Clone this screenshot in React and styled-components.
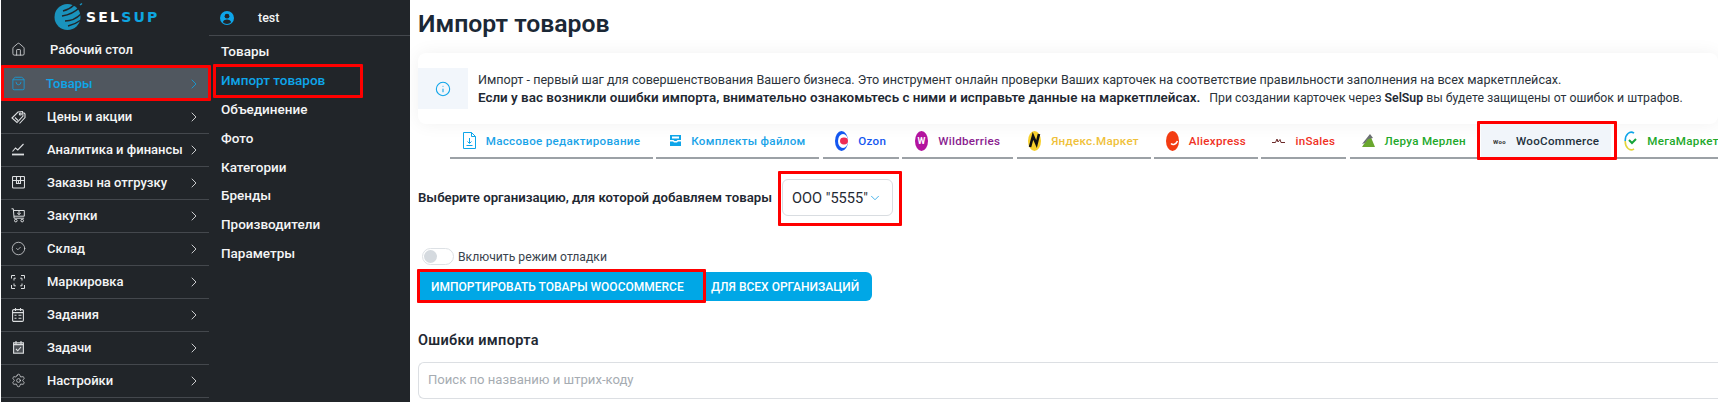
import React from 'react';
import styled, { createGlobalStyle, css } from 'styled-components';
import { House, ShoppingBag, CircleCheck, Settings, ChevronRight, ChevronDown, Info } from 'lucide-react';

const GlobalStyle = createGlobalStyle`
  html, body { margin: 0; padding: 0; background: #fff; }
  body {
    width: 1718px;
    height: 402px;
    overflow: hidden;
    font-family: Roboto, "Liberation Sans", sans-serif;
  }
`;

const redBox = css`
  position: relative;
  &::after {
    content: '';
    position: absolute;
    inset: ${(p) => p.$inset};
    border: 3px solid #f00;
    border-radius: 1px;
    pointer-events: none;
    z-index: 3;
  }
`;

const Page = styled.div`
  display: flex;
  height: 402px;
  padding-left: 1px;
  box-sizing: border-box;
`;

const Sidebar = styled.aside`
  width: 208px;
  flex: none;
  background: #212529;
`;

const LogoRow = styled.div`
  height: 33px;
  display: flex;
  align-items: center;
  padding-left: 53px;
  gap: 3px;
`;

const LogoText = styled.span`
  font-family: "DejaVu Sans", sans-serif;
  font-weight: 700;
  font-size: 14px;
  letter-spacing: 2.2px;
  color: #fff;
  b { color: #0ea5e0; font-weight: 700; }
`;

const NavRow = styled.div`
  height: ${(p) => (p.$plain ? 34 : 33)}px;
  box-sizing: border-box;
  display: flex;
  align-items: center;
  padding: 0 7px ${(p) => (p.$plain ? 0 : 1)}px 10px;
  color: ${(p) => (p.$active ? '#0ea5e9' : '#f4f5f6')};
  background: ${(p) => (p.$active ? '#50575f' : 'transparent')};
  border-bottom: 1px solid ${(p) => (p.$plain ? 'transparent' : '#44484d')};
  ${(p) => p.$inset && redBox}
`;

const NavIcon = styled.span`
  width: 14px;
  height: 16px;
  flex: none;
  display: flex;
  align-items: center;
  justify-content: center;
  color: ${(p) => (p.$active ? '#0ea5e9' : '#dcdee0')};
  svg { display: block; flex: none; }
`;

const NavLabel = styled.span`
  flex: 1;
  margin-left: ${(p) => p.$gap}px;
  font-size: 13px;
  font-weight: 500;
  white-space: nowrap;
`;

const SubPanel = styled.div`
  width: 201px;
  flex: none;
  background: #212529;
`;

const UserRow = styled.div`
  height: 36px;
  box-sizing: border-box;
  display: flex;
  align-items: center;
  padding-left: 11px;
  gap: 24px;
  color: #f4f5f6;
  font-size: 12.5px;
  font-weight: 500;
  border-bottom: 1px solid #44484d;
`;

const SubList = styled.div`
  display: flex;
  flex-direction: column;
  padding-top: 1px;
`;

const SubItem = styled.div`
  height: 28.8px;
  display: flex;
  align-items: center;
  padding-left: 12px;
  font-size: 13.5px;
  font-weight: 500;
  color: ${(p) => (p.$active ? '#0ea5e9' : '#f4f5f6')};
  ${(p) => p.$inset && redBox}
`;

const Main = styled.main`
  flex: 1;
  min-width: 0;
  overflow: hidden;
  padding: 8px 0 0 8px;
  color: #1f2933;
`;

const Title = styled.h1`
  margin: 0;
  height: 45px;
  font-size: 24.8px;
  line-height: 32px;
  font-weight: 600;
  color: #1b2836;
`;

const InfoCard = styled.section`
  height: 71px;
  display: flex;
  align-items: center;
  gap: 10px;
  border-radius: 8px;
  background: #fff;
  box-shadow: 0 0 18px rgba(0, 0, 0, 0.06);
`;

const InfoIconBox = styled.div`
  width: 50px;
  height: 41px;
  flex: none;
  display: flex;
  align-items: center;
  justify-content: center;
  background: #f2f6fb;
  color: #0ea5e9;
`;

const InfoText = styled.div`
  font-size: 12.6px;
  line-height: 18px;
  white-space: nowrap;
  color: #2b333b;
`;

const InfoStrong = styled.b`
  font-size: 13.45px;
  font-weight: 600;
  color: #1f2933;
`;

const InfoNote = styled.span`
  font-size: 12.3px;
  margin-left: 9px;
  b { font-weight: 600; color: #1f2933; }
`;

const Tabs = styled.nav`
  display: flex;
  gap: 3.4px;
  margin-left: 32px;
  height: 35px;
`;

const Tab = styled.div`
  width: ${(p) => p.$width}px;
  flex: none;
  box-sizing: border-box;
  display: flex;
  align-items: center;
  justify-content: center;
  gap: 10px;
  color: ${(p) => p.$color};
  font-size: 11.6px;
  font-weight: 500;
  letter-spacing: 0.3px;
  white-space: nowrap;
  border-bottom: 2px solid ${(p) => (p.$active ? '#0ea5e9' : '#9ca1a6')};
  background: ${(p) => (p.$active ? '#f1f5fa' : 'transparent')};
  ${(p) => p.$inset && redBox}
`;

const OrgRow = styled.div`
  display: flex;
  align-items: center;
  margin-top: 20px;
  gap: 9px;
`;

const OrgLabel = styled.span`
  width: 355px;
  font-size: 13.2px;
  font-weight: 600;
  white-space: nowrap;
`;

const OrgSelect = styled.div`
  width: 111px;
  height: 37px;
  box-sizing: border-box;
  display: flex;
  align-items: center;
  padding-left: 9px;
  border: 1px solid #d9dde1;
  border-radius: 6px;
  font-size: 14.6px;
  color: #1f2933;
  white-space: nowrap;
  ${redBox}
  svg { color: #2fa8e6; flex: none; }
`;

const DebugRow = styled.label`
  display: flex;
  align-items: center;
  gap: 4px;
  margin: 32px 0 0 4px;
  height: 17px;
  font-size: 12.2px;
  color: #3a444e;
`;

const Toggle = styled.span`
  width: 32px;
  height: 17px;
  box-sizing: border-box;
  border: 1px solid #dde1e5;
  border-radius: 9px;
  padding: 1px;
  &::before {
    content: '';
    display: block;
    width: 13px;
    height: 13px;
    border-radius: 50%;
    background: #d5dadf;
  }
`;

const ImportGroup = styled.div`
  display: flex;
  width: 454px;
  height: 29px;
  margin-top: 7px;
  background: #00a7e6;
  border-radius: 3px 6px 6px 3px;
`;

const ImportPart = styled.div`
  width: ${(p) => p.$width}px;
  box-sizing: border-box;
  display: flex;
  align-items: center;
  padding-left: ${(p) => p.$pad}px;
  color: #fff;
  font-size: 12px;
  font-weight: 500;
  white-space: nowrap;
  ${(p) => p.$inset && redBox}
`;

const ErrorsTitle = styled.h2`
  margin: 31px 0 0;
  font-size: 14.5px;
  line-height: 18px;
  font-weight: 600;
  letter-spacing: 0.3px;
  color: #1f2933;
`;

const SearchBox = styled.div`
  height: 37px;
  margin-top: 12px;
  box-sizing: border-box;
  display: flex;
  align-items: center;
  padding: 0 0 2px 9px;
  border: 1px solid #dcdfe3;
  border-right: 0;
  border-radius: 6px 0 0 6px;
  font-size: 13.1px;
  color: #a6acb2;
`;

const TagIcon = () => (
  <svg width="15" height="14" viewBox="0 0 15 14" fill="none" stroke="currentColor" strokeWidth="1.1">
    <path d="M1 8l6-6 4.5-.5L12 6l-6 6.5z" />
    <path d="M12.5 2.5L14 4v3.5l-5.5 6" />
    <circle cx="9.3" cy="4" r="1" />
    <path d="M4 7.5l3 3" />
  </svg>
);

const ChartIcon = () => (
  <svg width="14" height="13" viewBox="0 0 14 13" fill="none" stroke="currentColor" strokeWidth="1.1">
    <path d="M1.5 8.5l3-3.5 2.3 2L12.5 1" />
    <path d="M1 11.5h12" strokeWidth="1.8" />
  </svg>
);

const OrdersIcon = () => (
  <svg width="13" height="13" viewBox="0 0 13 13" fill="none" stroke="currentColor" strokeWidth="1.1">
    <rect x=".5" y=".5" width="12" height="11.5" rx="1" />
    <path d="M.5 4.5h12M4.5 .5v7h4v-7M6.5 4.5v3" />
  </svg>
);

const CartIcon = () => (
  <svg width="14" height="15" viewBox="0 0 14 15" fill="none" stroke="currentColor" strokeWidth="1">
    <path d="M.5 .8h1.8l.8 9.4h10" />
    <path d="M2.5 2.5h10.8v5.7H3" />
    <path d="M8 2.8v3.6M6.2 5l1.8 1.6L9.8 5" />
    <circle cx="4.8" cy="12.6" r="1.3" />
    <circle cx="11.2" cy="12.6" r="1.3" />
  </svg>
);

const ScanIcon = () => (
  <svg width="14" height="14" viewBox="0 0 14 14" fill="none" stroke="currentColor" strokeWidth="1">
    <path d="M.5 3.5v-3h3.5M10 .5h3.5v3M.5 10v3.5H4M10 13.5h3.5V10" />
    <path d="M3 5.5V3.2h1.8M9.2 3.2H11v2.3M3 8.5v2.3h1.8M9.2 10.8H11V8.5" />
  </svg>
);

const NotesIcon = () => (
  <svg width="12" height="14" viewBox="0 0 12 14" fill="none" stroke="currentColor" strokeWidth="1.1">
    <rect x=".6" y="1.6" width="10.8" height="11.8" rx="1.2" />
    <path d="M3.5 0v3M8.5 0v3M.6 4.6h10.8" />
    <path d="M2.5 7.3h2M6.5 7.3h3M2.5 10.3h2M6.5 10.3h3" />
  </svg>
);

const TaskIcon = () => (
  <svg width="11" height="13" viewBox="0 0 11 13" fill="none" stroke="currentColor" strokeWidth="1.1">
    <rect x=".6" y="1.8" width="9.8" height="10.4" fill="#4b4f54" />
    <path d="M3 0v3M8 0v3M.6 3.6h9.8" />
    <path d="M3 8l1.8 1.8L8 6" />
  </svg>
);

const UserIcon = () => (
  <svg width="14" height="14" viewBox="0 0 14 14">
    <circle cx="7" cy="7" r="7" fill="#0ea5e9" />
    <circle cx="7" cy="5.2" r="2.4" fill="#212529" />
    <path d="M2.8 11.2c1-2 2.5-2.6 4.2-2.6s3.2.6 4.2 2.6A6 6 0 0 1 7 13a6 6 0 0 1-4.2-1.8z" fill="#212529" />
  </svg>
);

const GlobeLogo = () => (
  <svg width="29" height="29" viewBox="0 0 29 29" fill="none">
    <circle cx="13.5" cy="15" r="13" fill="#1a93bd" />
    <path d="M9 9c4-1 8-3 11-6M8 14c6-1 12-3 17-8M11 19c5 0 11-2 16-7M14 24c4-1 9-3 13-6" stroke="#212529" strokeWidth="1.5" />
    <path d="M26 3l2-1.5" stroke="#1a93bd" strokeWidth="1.5" />
  </svg>
);

const TabLogo = ({ children }) => (
  <svg width="13" height="20" viewBox="0 0 13 20" fill="none">
    {children}
  </svg>
);

const FileLogo = () => (
  <svg width="13" height="17" viewBox="0 0 13 17" fill="none" stroke="#0ea5e9" strokeWidth="1">
    <path d="M.5 .5h8l4 4v12h-12z" />
    <path d="M8.5 .5v4h4M6.5 6v5M4.5 9.5l2 2 2-2M3.5 13.5h6" />
  </svg>
);

const SetLogo = () => (
  <svg width="11" height="11" viewBox="0 0 11 11">
    <path d="M0 0h11v5H7.5L6.5 6h-2l-1-1H0z" fill="#0ea5e9" />
    <path d="M0 6.5h3l1 1h3l1-1h3V11H0z" fill="#0ea5e9" />
    <rect x="2" y="1.5" width="7" height="2" fill="#fff" />
  </svg>
);

const OzonLogo = () => (
  <TabLogo>
    <ellipse cx="6.5" cy="10" rx="6.5" ry="10" fill="#1457f0" />
    <ellipse cx="8" cy="10" rx="5" ry="7" fill="#fff" />
    <ellipse cx="9" cy="10" rx="4" ry="3.4" fill="#ee2b55" />
  </TabLogo>
);

const WbLogo = () => (
  <TabLogo>
    <ellipse cx="6.5" cy="10" rx="6.5" ry="10" fill="#b3149e" />
    <text x="6.5" y="13" textAnchor="middle" fontSize="9" fontWeight="700" fill="#fff" fontFamily="Roboto">W</text>
  </TabLogo>
);

const YandexLogo = () => (
  <TabLogo>
    <ellipse cx="6.5" cy="10" rx="6.5" ry="10" fill="#f7d02c" />
    <path d="M2 16L5 5l3.5 8L11 3" stroke="#111" strokeWidth="2.6" />
  </TabLogo>
);

const AliLogo = () => (
  <TabLogo>
    <ellipse cx="6.5" cy="10" rx="6.5" ry="10" fill="#f33c12" />
    <path d="M5 12.5c2 2 5 1 6.5-2.5" stroke="#fff" strokeWidth="1.6" />
  </TabLogo>
);

const SalesLogo = () => (
  <svg width="13" height="6" viewBox="0 0 13 6">
    <path d="M0 4.5h3.5L5 1l1 3 2-2.5L9 4.5h4" stroke="#6b2a2a" strokeWidth="1" fill="none" />
  </svg>
);

const LeroyLogo = () => (
  <svg width="13" height="13" viewBox="0 0 13 13">
    <path d="M0 13L8 1l5 12z" fill="#6aa72f" />
    <path d="M0 10L8 0l3 4-5 1-3 4z" fill="#6b6f72" />
  </svg>
);

const WooLogo = () => (
  <svg width="13" height="8" viewBox="0 0 13 8">
    <text x="0" y="6.5" fontSize="6" fontWeight="700" fill="#333" fontFamily="Roboto">Woo</text>
  </svg>
);

const MegaLogo = () => (
  <TabLogo>
    <path d="M10 2.2A6 8.5 0 0 0 1.2 10" stroke="#0ea5e9" strokeWidth="1.6" />
    <path d="M1.2 10A6 8.5 0 0 0 10 17.8" stroke="#e3d53a" strokeWidth="1.6" />
    <path d="M5 9l3 3 4-4" stroke="#15a43a" strokeWidth="2" />
  </TabLogo>
);

const navItems = [
  { label: 'Рабочий стол', icon: <House size={15} strokeWidth={1.3} />, gap: 25, plain: true, noArrow: true },
  { label: 'Товары', icon: <ShoppingBag size={15} strokeWidth={1.2} />, gap: 21, active: true, plain: true, inset: '-2px -2px -1px 0' },
  { label: 'Цены и акции', icon: <TagIcon />, gap: 22 },
  { label: 'Аналитика и финансы', icon: <ChartIcon />, gap: 22 },
  { label: 'Заказы на отгрузку', icon: <OrdersIcon />, gap: 22 },
  { label: 'Закупки', icon: <CartIcon />, gap: 22 },
  { label: 'Склад', icon: <CircleCheck size={15} strokeWidth={1.2} />, gap: 22 },
  { label: 'Маркировка', icon: <ScanIcon />, gap: 22 },
  { label: 'Задания', icon: <NotesIcon />, gap: 22 },
  { label: 'Задачи', icon: <TaskIcon />, gap: 22 },
  { label: 'Настройки', icon: <Settings size={15} strokeWidth={1.2} />, gap: 22 },
];

const subItems = ['Товары', 'Импорт товаров', 'Объединение', 'Фото', 'Категории', 'Бренды', 'Производители', 'Параметры'];

const tabs = [
  { label: 'Массовое редактирование', width: 203, color: '#1aa3e8', logo: <FileLogo /> },
  { label: 'Комплекты файлом', width: 163, color: '#1aa3e8', logo: <SetLogo /> },
  { label: 'Ozon', width: 76, color: '#1457f0', logo: <OzonLogo /> },
  { label: 'Wildberries', width: 111, color: '#8a1d8f', logo: <WbLogo /> },
  { label: 'Яндекс.Маркет', width: 134, color: '#efc13a', logo: <YandexLogo /> },
  { label: 'Aliexpress', width: 104, color: '#ef3124', logo: <AliLogo /> },
  { label: 'inSales', width: 85, color: '#ef3124', logo: <SalesLogo /> },
  { label: 'Леруа Мерлен', width: 128, color: '#22a82a', logo: <LeroyLogo /> },
  { label: 'WooCommerce', width: 130, color: '#22303c', logo: <WooLogo />, active: true, inset: '-3px -6px -3px -4px' },
  { label: 'МегаМаркет', width: 114, color: '#22a82a', logo: <MegaLogo /> },
];

function App() {
  return (
    <>
      <GlobalStyle />
      <Page>
        <Sidebar>
          <LogoRow>
            <GlobeLogo />
            <LogoText>SEL<b>SUP</b></LogoText>
          </LogoRow>
          {navItems.map((item) => (
            <NavRow key={item.label} $active={item.active} $plain={item.plain} $inset={item.inset}>
              <NavIcon $active={item.active}>{item.icon}</NavIcon>
              <NavLabel $gap={item.gap}>{item.label}</NavLabel>
              {!item.noArrow && <ChevronRight size={16} strokeWidth={1.2} />}
            </NavRow>
          ))}
        </Sidebar>
        <SubPanel>
          <UserRow>
            <UserIcon />
            <span>test</span>
          </UserRow>
          <SubList>
            {subItems.map((item, i) => (
              <SubItem key={item} $active={i === 1} $inset={i === 1 ? '-2px 47px -3px 4px' : undefined}>
                {item}
              </SubItem>
            ))}
          </SubList>
        </SubPanel>
        <Main>
          <Title>Импорт товаров</Title>
          <InfoCard>
            <InfoIconBox>
              <Info size={16} strokeWidth={1.6} />
            </InfoIconBox>
            <InfoText>
              Импорт - первый шаг для совершенствования Вашего бизнеса. Это инструмент онлайн проверки Ваших карточек на соответствие правильности заполнения на всех маркетплейсах.
              <br />
              <InfoStrong>Если у вас возникли ошибки импорта, внимательно ознакомьтесь с ними и исправьте данные на маркетплейсах.</InfoStrong>
              <InfoNote>При создании карточек через <b>SelSup</b> вы будете защищены от ошибок и штрафов.</InfoNote>
            </InfoText>
          </InfoCard>
          <Tabs>
            {tabs.map((tab) => (
              <Tab key={tab.label} $width={tab.width} $color={tab.color} $active={tab.active} $inset={tab.inset}>
                {tab.logo}
                {tab.label}
              </Tab>
            ))}
          </Tabs>
          <OrgRow>
            <OrgLabel>Выберите организацию, для которой добавляем товары</OrgLabel>
            <OrgSelect $inset="-9px -10px -11px -5px">
              ООО "5555"
              <ChevronDown size={14} strokeWidth={1.5} />
            </OrgSelect>
          </OrgRow>
          <DebugRow>
            <Toggle />
            Включить режим отладки
          </DebugRow>
          <ImportGroup>
            <ImportPart $width={287} $pad={13} $inset="-3px -1px -2px -1px">ИМПОРТИРОВАТЬ ТОВАРЫ WOOCOMMERCE</ImportPart>
            <ImportPart $width={167} $pad={6}>ДЛЯ ВСЕХ ОРГАНИЗАЦИЙ</ImportPart>
          </ImportGroup>
          <ErrorsTitle>Ошибки импорта</ErrorsTitle>
          <SearchBox>Поиск по названию и штрих-коду</SearchBox>
        </Main>
      </Page>
    </>
  );
}

export default App;
